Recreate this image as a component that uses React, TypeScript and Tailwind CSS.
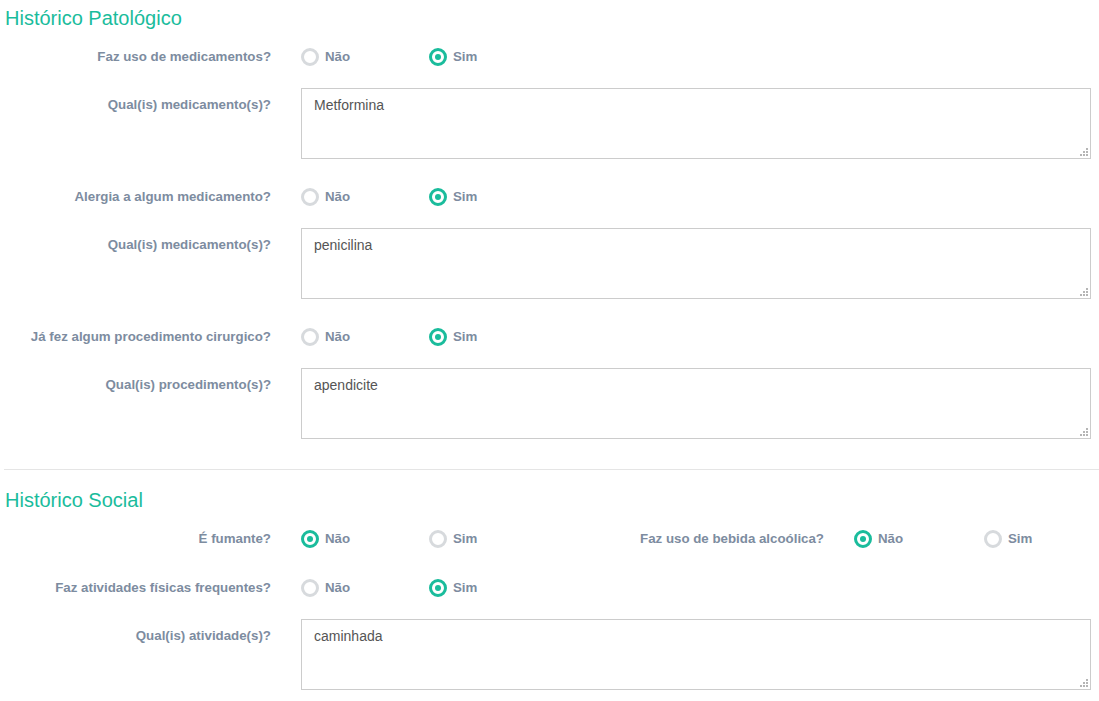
import React from "react";

const font = { fontFamily: '"Liberation Sans", Arial, sans-serif' };

function Radio({ checked, label, w = "w-[128px]" }: { checked: boolean; label: string; w?: string }) {
  return (
    <div className={`flex items-center shrink-0 ${w}`}>
      {checked ? (
        <span className="w-[18px] h-[18px] shrink-0 rounded-full border-[3px] border-[#1abc9c] flex items-center justify-center bg-white">
          <span className="w-[6px] h-[6px] rounded-full bg-[#1abc9c]" />
        </span>
      ) : (
        <span className="w-[18px] h-[18px] shrink-0 rounded-full border-[3px] border-[#d7dadd] bg-white" />
      )}
      <span className="ml-[6px] text-[13.3px] font-bold text-[#7d8ca0] leading-[20px]">{label}</span>
    </div>
  );
}

function Label({ children }: { children: React.ReactNode }) {
  return (
    <div className="w-[271px] shrink-0 text-right text-[13.3px] font-bold text-[#7d8ca0] leading-[20px] mr-[30px]">
      {children}
    </div>
  );
}

function RadioRow({ label, value, className = "" }: { label: string; value: "nao" | "sim"; className?: string }) {
  return (
    <div className={`flex items-center h-[20px] ${className}`}>
      <Label>{label}</Label>
      <Radio checked={value === "nao"} label="Não" />
      <Radio checked={value === "sim"} label="Sim" />
    </div>
  );
}

function Area({ label, value, className = "" }: { label: string; value: string; className?: string }) {
  return (
    <div className={`flex items-start ${className}`}>
      <div className="w-[271px] shrink-0 text-right text-[13.3px] font-bold text-[#7d8ca0] leading-[20px] mr-[30px] mt-[7px]">
        {label}
      </div>
      <div className="relative w-[790px] h-[71px]">
        <textarea
          readOnly
          value={value}
          className="w-full h-full border border-[#cccccc] bg-white px-[12px] py-[6px] text-[14px] leading-[20px] text-[#555555] resize-none outline-none"
          style={font}
        />
        <svg className="absolute right-[3px] bottom-[3px]" width="8" height="8" viewBox="0 0 8 8">
          <rect x="6" y="0" width="2" height="2" fill="#b5b5b5" />
          <rect x="3" y="3" width="2" height="2" fill="#b5b5b5" />
          <rect x="6" y="3" width="2" height="2" fill="#b5b5b5" />
          <rect x="0" y="6" width="2" height="2" fill="#b5b5b5" />
          <rect x="3" y="6" width="2" height="2" fill="#b5b5b5" />
          <rect x="6" y="6" width="2" height="2" fill="#b5b5b5" />
        </svg>
      </div>
    </div>
  );
}

export default function App() {
  return (
    <div className="w-[1099px] h-[701px] bg-white overflow-hidden" style={font}>
      <div className="pt-[7px]">
        <h2 className="pl-[5px] text-[20px] leading-[22px] text-[#1abc9c] font-normal">Histórico Patológico</h2>
        <RadioRow label="Faz uso de medicamentos?" value="sim" className="mt-[18px]" />
        <Area label="Qual(is) medicamento(s)?" value="Metformina" className="mt-[21px]" />
        <RadioRow label="Alergia a algum medicamento?" value="sim" className="mt-[28px]" />
        <Area label="Qual(is) medicamento(s)?" value="penicilina" className="mt-[21px]" />
        <RadioRow label="Já fez algum procedimento cirurgico?" value="sim" className="mt-[28px]" />
        <Area label="Qual(is) procedimento(s)?" value="apendicite" className="mt-[21px]" />
        <div className="ml-[4px] mt-[30px] h-px bg-[#e5e5e5]" />
        <h2 className="mt-[19px] pl-[5px] text-[20px] leading-[22px] text-[#1abc9c] font-normal">Histórico Social</h2>
        <div className="flex items-center h-[20px] mt-[18px]">
          <div className="flex items-center w-[553px] shrink-0">
            <Label>É fumante?</Label>
            <Radio checked label="Não" />
            <Radio checked={false} label="Sim" w="w-[124px]" />
          </div>
          <div className="flex items-center">
            <Label>Faz uso de bebida alcoólica?</Label>
            <Radio checked label="Não" w="w-[130px]" />
            <Radio checked={false} label="Sim" w="w-[100px]" />
          </div>
        </div>
        <RadioRow label="Faz atividades físicas frequentes?" value="sim" className="mt-[29px]" />
        <Area label="Qual(is) atividade(s)?" value="caminhada" className="mt-[21px]" />
      </div>
    </div>
  );
}
